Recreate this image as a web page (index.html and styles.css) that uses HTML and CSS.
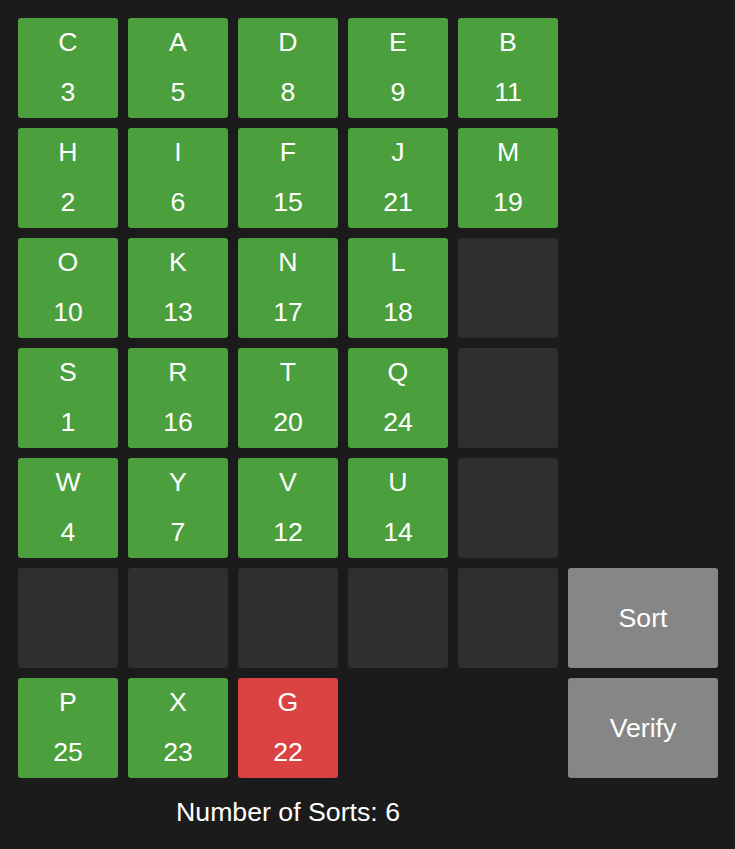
FILE: index.html
```html
<!DOCTYPE html>
<html>
<head>
<meta charset="utf-8">
<link rel="stylesheet" href="styles.css">
</head>
<body>
<div class="board">
  <div class="tile ok"><span>C</span><span>3</span></div>
  <div class="tile ok"><span>A</span><span>5</span></div>
  <div class="tile ok"><span>D</span><span>8</span></div>
  <div class="tile ok"><span>E</span><span>9</span></div>
  <div class="tile ok"><span>B</span><span>11</span></div>
  <div class="gap"></div>

  <div class="tile ok"><span>H</span><span>2</span></div>
  <div class="tile ok"><span>I</span><span>6</span></div>
  <div class="tile ok"><span>F</span><span>15</span></div>
  <div class="tile ok"><span>J</span><span>21</span></div>
  <div class="tile ok"><span>M</span><span>19</span></div>
  <div class="gap"></div>

  <div class="tile ok"><span>O</span><span>10</span></div>
  <div class="tile ok"><span>K</span><span>13</span></div>
  <div class="tile ok"><span>N</span><span>17</span></div>
  <div class="tile ok"><span>L</span><span>18</span></div>
  <div class="tile empty"></div>
  <div class="gap"></div>

  <div class="tile ok"><span>S</span><span>1</span></div>
  <div class="tile ok"><span>R</span><span>16</span></div>
  <div class="tile ok"><span>T</span><span>20</span></div>
  <div class="tile ok"><span>Q</span><span>24</span></div>
  <div class="tile empty"></div>
  <div class="gap"></div>

  <div class="tile ok"><span>W</span><span>4</span></div>
  <div class="tile ok"><span>Y</span><span>7</span></div>
  <div class="tile ok"><span>V</span><span>12</span></div>
  <div class="tile ok"><span>U</span><span>14</span></div>
  <div class="tile empty"></div>
  <div class="gap"></div>

  <div class="tile empty"></div>
  <div class="tile empty"></div>
  <div class="tile empty"></div>
  <div class="tile empty"></div>
  <div class="tile empty"></div>
  <button class="btn">Sort</button>

  <div class="tile ok"><span>P</span><span>25</span></div>
  <div class="tile ok"><span>X</span><span>23</span></div>
  <div class="tile bad"><span>G</span><span>22</span></div>
  <div class="gap"></div>
  <div class="gap"></div>
  <button class="btn">Verify</button>
</div>
<div class="counter">Number of Sorts: 6</div>
</body>
</html>
```
FILE: styles.css
```css
html, body {
  margin: 0;
  background: #1b1b1b;
}
body {
  padding: 18px;
  font-family: "Liberation Sans", Arial, sans-serif;
  color: #ffffff;
}
.board {
  display: grid;
  grid-template-columns: repeat(5, 100px) 150px;
  grid-auto-rows: 100px;
  gap: 10px;
}
.tile {
  border-radius: 3px;
  display: flex;
  flex-direction: column;
  align-items: center;
  justify-content: space-between;
  padding: 9px 0 11px;
  box-sizing: border-box;
  font-size: 26.7px;
  line-height: 30px;
}
.ok { background: #4b9f3d; }
.bad { background: #db4343; }
.empty { background: #2f2f2f; }
.btn {
  border: none;
  border-radius: 3px;
  background: #868686;
  color: #ffffff;
  font-family: "Liberation Sans", Arial, sans-serif;
  font-size: 26.7px;
  padding: 0;
}
.counter {
  width: 540px;
  text-align: center;
  font-size: 26.7px;
  line-height: 30px;
  margin-top: 19px;
}
```
